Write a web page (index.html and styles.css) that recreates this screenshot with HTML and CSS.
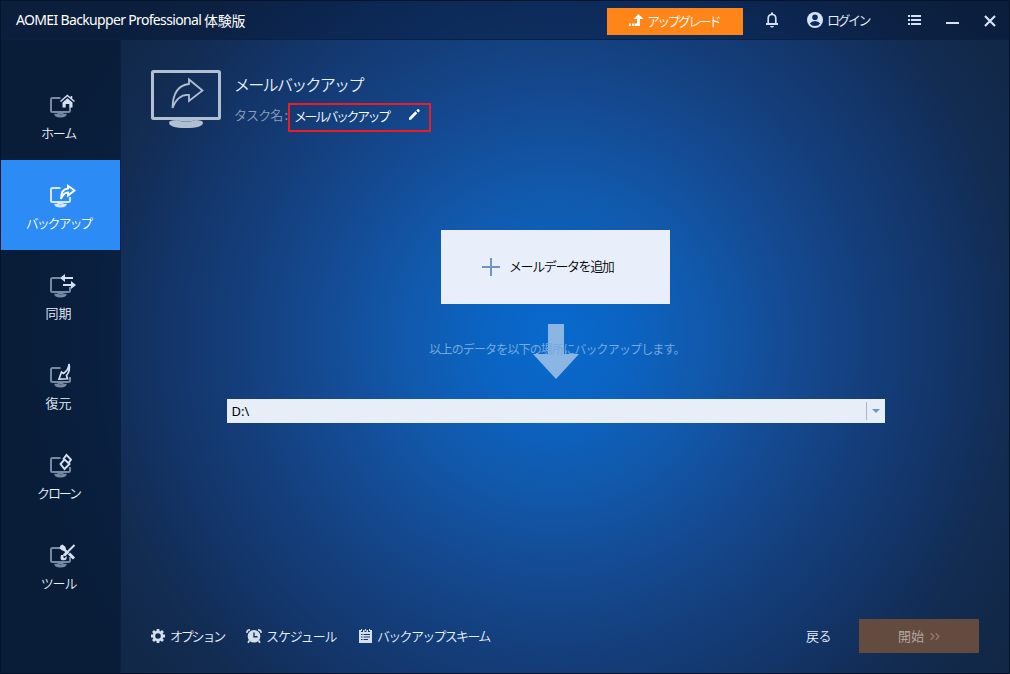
FILE: index.html
```html
<!DOCTYPE html>
<html lang="ja">
<head>
<meta charset="utf-8">
<title>AOMEI Backupper Professional</title>
<link rel="stylesheet" href="styles.css">
</head>
<body>
<svg class="defs" width="0" height="0">
  <symbol id="monitor" viewBox="0 0 28 24">
    <path d="M11.500 4H3.500Q2 4 2 5.500V16.500Q2 18 3.500 18H19.500Q21 18 21 16.500V13" fill="none" stroke="currentColor" stroke-width="2"/>
    <path d="M5.200 19.800h3.300q3 1.200 6 0h3.300q0 3.700-6.300 3.700t-6.300-3.700z" fill="currentColor"/>
    <path d="M8.500 18.500h6v1.200q-3 1-6 0z" fill="currentColor"/>
  </symbol>
</svg>
<div class="window">
  <header class="titlebar">
    <h1 class="title"><span class="title-latin">AOMEI Backupper Professional</span><span class="title-ja">体験版</span></h1>
    <button class="upgrade">
      <svg width="15" height="14" viewBox="0 0 15 14"><path d="M9.500 0L14.500 5H11V12H5.500V9.500H8V5H4.500z" fill="#fff"/><path d="M0 9.500h2V12H0zM3 9.500h1.800V12H3z" fill="#fff"/></svg>
      <span>アップグレード</span>
    </button>
    <svg class="bell" width="14" height="16" viewBox="0 0 14 16"><path d="M3.200 12V6.500Q3.200 2.500 7 2.500T10.800 6.500V12" fill="none" stroke="#d5e2f5" stroke-width="1.700"/><path d="M6 .5h2v2H6zM1 11h12v2H1zM5 14h4q-.5 1.500-2 1.500T5 14z" fill="#d5e2f5"/></svg>
    <div class="login">
      <svg width="16" height="16" viewBox="0 0 16 16"><circle cx="8" cy="8" r="8" fill="#d5e2f5"/><circle cx="8" cy="5.200" r="2.800" fill="#0c2a5c"/><path d="M2.800 11.500Q4.500 9 8 9t5.200 2.500Q11.500 14 8 14t-5.200-2.500z" fill="#0c2a5c"/></svg>
      <span>ログイン</span>
    </div>
    <svg class="menu" width="13" height="11" viewBox="0 0 13 11"><path d="M0 0h2v2H0zM3 0h10v2H3zM0 4h2v2H0zM3 4h10v2H3zM0 8h2v2H0zM3 8h10v2H3z" fill="#d5e2f5"/></svg>
    <svg class="minimize" width="13" height="2" viewBox="0 0 13 2"><path d="M0 0h13v2H0z" fill="#d5e2f5"/></svg>
    <svg class="close" width="12" height="12" viewBox="0 0 12 12"><path d="M1 1L11 11M11 1L1 11" stroke="#d5e2f5" stroke-width="2.200"/></svg>
  </header>
  <div class="body">
    <nav class="sidebar">
      <a class="nav-item">
        <svg width="28" height="24" viewBox="0 0 28 24"><use href="#monitor" class="dim"/><path d="M11.500 7.500L18.300 1.500L25.500 7.500M22.500 2V5" fill="none" stroke="#d5e0f1" stroke-width="1.500"/><path d="M13.500 8.500L18.500 4.300L23.500 8.500V13.500H20.300V10H16.700V13.500H13.500z" fill="#d5e0f1"/></svg>
        <span class="w3">ホーム</span>
      </a>
      <a class="nav-item active">
        <svg width="28" height="24" viewBox="0 0 28 24"><use href="#monitor" class="dim"/><path d="M12 15Q12 5 19 4.500V1.800L25.500 6.500L19 11.500V8.500Q14.500 8.500 12 15z" fill="none" stroke="#fff" stroke-width="1.900"/></svg>
        <span>バックアップ</span>
      </a>
      <a class="nav-item">
        <svg width="28" height="24" viewBox="0 0 28 24"><use href="#monitor" class="dim"/><path d="M11 4L16 0V3H24V5H16V8zM27 11L22 7V10H14V12H22V15z" fill="#d5e0f1"/></svg>
        <span class="kanji">同期</span>
      </a>
      <a class="nav-item">
        <svg width="28" height="24" viewBox="0 0 28 24"><use href="#monitor" class="dim"/><path d="M20 0Q20 5.500 14.500 9.500L12.500 8L10 15L18.500 14.800L17.500 11.500Q21.500 7 20 0z" fill="none" stroke="#d5e0f1" stroke-width="1.700"/></svg>
        <span class="kanji">復元</span>
      </a>
      <a class="nav-item">
        <svg width="28" height="24" viewBox="0 0 28 24"><use href="#monitor" class="dim"/><path d="M15.500 5.500L20.500 10L15.500 15L11.500 10zM14 5.500L17.500 1L22 5.500L19 10" fill="none" stroke="#d5e0f1" stroke-width="1.900"/></svg>
        <span>クローン</span>
      </a>
      <a class="nav-item">
        <svg width="28" height="24" viewBox="0 0 28 24"><use href="#monitor" class="dim"/><path d="M25.500 1L19 7.500" stroke="#d5e0f1" stroke-width="2"/><path d="M19 7.500L15 11.500M20 9.500L25 14.500" stroke="#d5e0f1" stroke-width="3"/><path d="M11.500 1.500l2-1 3 2.500.5 2.500 3 3-1.700 1.700-3-3-2.500-1-2.300-2zM12 11h3l-.8 2.200 1.500 1L17.500 12q1 4-2.500 4.300T11.500 14z" fill="#d5e0f1"/></svg>
        <span class="w3">ツール</span>
      </a>
    </nav>
    <main class="content">
      <section class="task">
        <svg class="task-icon" width="70" height="59" viewBox="0 0 70 59"><rect x="1.500" y="1.500" width="67" height="47" rx="1" fill="none" stroke="#b0bfd2" stroke-width="3"/><path d="M18 52.500q0-2.500 8-2.500q9 4 18 0q8 0 8 2.500q0 5.500-17 5.500T18 52.500z" fill="#b0bfd2"/><path d="M27 49h16v1.500q-8 2.500-16 0z" fill="#b0bfd2"/><path d="M21.500 38Q22 15.500 38 14V9.500L51.500 20.500L38 31V25Q27 24 21.500 38z" fill="none" stroke="#b0bfd2" stroke-width="1.800"/></svg>
        <div class="task-text">
          <h2>メールバックアップ</h2>
          <div class="task-name">
            <label>タスク名<b>:</b></label>
            <div class="name-box"><span>メールバックアップ</span><svg width="11" height="11" viewBox="0 0 12 12"><path d="M0 12V9.500L7 2.500L9 4.500L2.500 11.500zM8 1.700L9.300.4Q10.300-.3 11.200.7T11.500 2.600L10.200 3.900z" fill="#fff"/></svg></div>
          </div>
        </div>
      </section>
      <section class="flow">
        <button class="add"><svg width="18" height="18" viewBox="0 0 18 18"><path d="M9 0V18M0 9H18" stroke="#6f96c0" stroke-width="2"/></svg><span>メールデータを追加</span></button>
        <div class="hint">
          <svg class="arrow" width="46" height="55" viewBox="0 0 46 55"><path d="M15 0H31V30H46L23 55L0 30H15z" fill="#8bb5e3"/></svg>
          <p>以上のデータを以下の場所にバックアップします。</p>
        </div>
        <div class="path"><span>D:\</span><i><svg width="8" height="4" viewBox="0 0 8 4"><path d="M0 0H8L4 4z" fill="#6e98c3"/></svg></i></div>
      </section>
      <footer class="actions">
        <a class="option"><svg width="14" height="14" viewBox="0 0 14 14"><path d="M7 0V14M0 7H14M2 2L12 12M12 2L2 12" stroke="#d5dfe9" stroke-width="2.800"/><circle cx="7" cy="7" r="4.100" fill="#112b50" stroke="#d5dfe9" stroke-width="2.600"/></svg><span>オプション</span></a>
        <a class="schedule"><svg width="16" height="14" viewBox="0 0 16 14"><circle cx="8" cy="7.200" r="6.300" fill="#d5dfe9"/><path d="M.7 3.800Q1 1 4 .8M15.300 3.800Q15 1 12 .8" fill="none" stroke="#d5dfe9" stroke-width="1.600"/><path d="M3.500 11.500L2 13.800M12.500 11.500L14 13.800" stroke="#d5dfe9" stroke-width="1.800"/><path d="M8 3.500V7.800H11.500" fill="none" stroke="#132f60" stroke-width="1.400"/></svg><span>スケジュール</span></a>
        <a class="scheme"><svg width="13" height="14" viewBox="0 0 13 14"><path d="M0 1H2V3H4V1H5.500V3H7.500V1H9V3H11V1H13V14H0z" fill="#d5dfe9"/><path d="M2.500 0V2M6.500 0V2M10.500 0V2" stroke="#d5dfe9"/><path d="M2 5.500H3.500M4.500 5.500H11M2 8H3.500M4.500 8H11M2 10.500H3.500M4.500 10.500H9" stroke="#14366c" stroke-width="1.200"/></svg><span>バックアップスキーム</span></a>
        <a class="back">戻る</a>
        <button class="start"><span>開始</span><svg width="10" height="7" viewBox="0 0 10 7"><path d="M.7.3L3.900 3.500L.7 6.700M5.700.3L8.900 3.500L5.700 6.700" fill="none" stroke="#937a6e" stroke-width="1.300"/></svg></button>
      </footer>
    </main>
  </div>
</div>
</body>
</html>
```
FILE: styles.css
```css
* { box-sizing: border-box; }
body { margin: 0; overflow: hidden; font: 13px/18px "Noto Sans CJK JP", sans-serif; font-weight: 350; color: #e8f0fb; }
button { border: 0; padding: 0; margin: 0; font: inherit; color: inherit; }
h1, h2, p { margin: 0; font-weight: inherit; }
svg { display: block; flex: none; overflow: visible; }
span, label, h2, p { white-space: nowrap; }
.defs { position: absolute; }
.window {
  width: 1010px; height: 674px; border: 1px solid #04142b; display: flex; flex-direction: column;
  background: radial-gradient(circle at 554px 338px, #086ace 0, #0b63c1 75px, #1159ac 150px, #144b94 230px, #14407e 305px, #133467 395px, #122b50 470px, #112745 550px);
}
.titlebar { height: 39px; flex: none; display: flex; align-items: center; border-bottom: 1px solid #0a2145; background: rgba(2, 15, 45, .38); }
.title { width: 606px; padding-left: 15px; display: flex; gap: 3px; font-size: 14px; line-height: 20px; color: #fff; font-weight: 400; }
.title-latin { width: 185px; font-family: "Noto Sans", sans-serif; letter-spacing: -.66px; }
.title-ja { letter-spacing: -.2px; }
.upgrade { width: 136px; height: 27px; margin-top: 2px; background: #ff8519; color: #fff; display: flex; align-items: center; gap: 3px; padding-left: 22px; }
.upgrade span { letter-spacing: -2.7px; }
.bell { margin-left: 22px; }
.login { display: flex; align-items: center; gap: 4px; margin-left: 28px; width: 101px; }
.login span { letter-spacing: -2.5px; }
.minimize { margin: 6px 25px 0 25px; }
.close { margin-top: 1px; }
.body { flex: 1; display: flex; min-height: 0; }
.sidebar { width: 120px; padding-top: 30px; background: rgba(2, 20, 45, .53); border-right: 1px solid #0b2041; }
.nav-item { height: 90px; padding: 24px 4px 0 0; display: flex; flex-direction: column; align-items: center; gap: 6px; }
.nav-item svg { margin-left: 9px; }
.nav-item span { letter-spacing: -2.1px; }
.nav-item .w3 { letter-spacing: -1.2px; }
.nav-item .kanji { letter-spacing: 0; }
.dim { color: #7889a3; }
.active { background: #2d8bf5; color: #fff; }
.active .dim { color: #d5e8fd; }
.content { flex: 1; display: flex; flex-direction: column; }
.task { height: 190px; padding: 30px 0 0 30px; display: flex; gap: 13px; }
.task h2 { font-size: 16px; line-height: 20px; margin-top: 4px; letter-spacing: -1.7px; }
.task-name { display: flex; margin-top: 9px; }
.task-name label { width: 54px; padding-top: 3px; color: #8c9fbb; letter-spacing: -.9px; }
.task-name b { font-weight: 400; margin-left: 2px; }
.name-box { width: 143px; height: 29px; border: 2px solid #ee1b24; padding: 0 9px 4px 4px; display: flex; align-items: center; justify-content: space-between; color: #fff; }
.name-box span { letter-spacing: -2.5px; }
.name-box svg { margin-bottom: 2px; }
.flow { height: 370px; display: flex; flex-direction: column; align-items: center; padding-right: 19px; }
.add { width: 229px; height: 74px; background: #e8effb; color: #000; display: flex; align-items: center; padding-left: 41px; gap: 9px; }
.add span { letter-spacing: -1.4px; margin-top: -2px; }
.hint { height: 95px; padding: 20px 0 0 2px; display: grid; justify-items: center; align-items: start; }
.hint > * { grid-area: 1 / 1; }
.hint p { margin: 16px 0 0 1px; font-size: 12px; font-weight: 400; letter-spacing: -.85px; color: #76a9df; }
.path { width: 658px; height: 24px; background: #e7eef8; color: #000; font: 13px/24px "Noto Sans", sans-serif; padding: 0 0 0 5px; display: flex; align-items: center; justify-content: space-between; }
.path i { width: 19px; height: 18px; border-left: 1px solid #a9b6c8; display: grid; place-items: center; }
.actions { display: flex; align-items: center; height: 34px; margin-top: 19px; padding-left: 30px; }
.actions a { display: flex; align-items: center; gap: 5px; }
.actions .option { width: 95px; }
.actions .schedule { width: 113px; gap: 4px; }
.actions .scheme { width: 447px; }
.actions .option span { letter-spacing: -2.2px; }
.actions .schedule span { letter-spacing: -1.1px; }
.actions .scheme span { letter-spacing: -1.7px; }
.actions .back { width: 53px; letter-spacing: -.5px; }
.start { width: 120px; height: 34px; background: #644b40; color: #b7aba6; display: flex; align-items: center; padding-left: 39px; gap: 6px; }
```
